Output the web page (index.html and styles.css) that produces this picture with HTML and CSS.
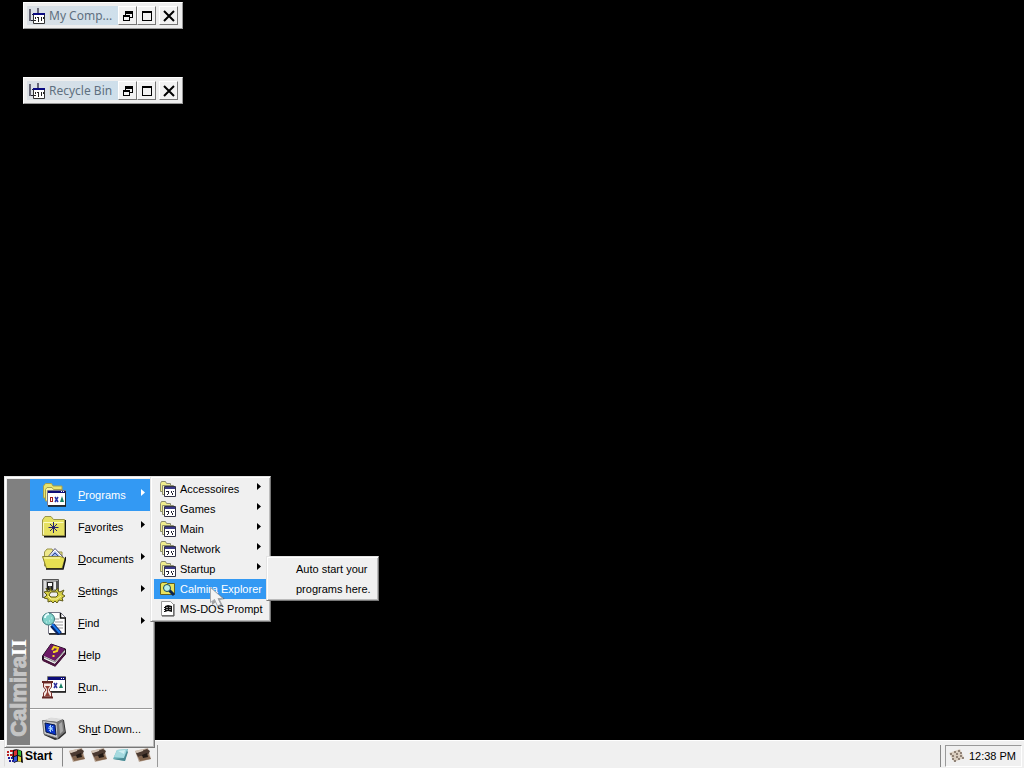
FILE: index.html
```html
<!DOCTYPE html>
<html lang="en">
<head>
<meta charset="utf-8">
<meta name="viewport" content="width=device-width, initial-scale=1">
<title>Calmira II</title>
<link rel="stylesheet" href="styles.css">
</head>
<body>
<svg class="defs" aria-hidden="true">
  <symbol id="arrow" viewBox="0 0 4 7"><path d="M0 0 4 3.5 0 7Z" fill="currentColor"/></symbol>
  <symbol id="desk" viewBox="0 0 16 16">
    <path d="M0 1h2v12H0zM8 0h2v5H8z" fill="#667"/><path d="M2 12h3v1H2zM3 6h1v1H3z" fill="#223"/>
    <path d="M4.500 5.500h11v10h-11z" fill="#fff" stroke="#333"/><path d="M4 5h12v2H4z" fill="#0a0a80"/>
    <path d="M6 9h1v2H6zM5 12h2v1H5zM8 9h2v1H8zM9 10h1v4H9zM12 9h1v4h-1zM14 9h1v2h-1z" fill="#222"/>
  </symbol>
  <symbol id="restore" viewBox="0 0 12 12"><path d="M3 1h8v7H8V7h2V4H4v1H3zM1 5h7v6H1zM2 7v3h5V7z" fill="#000" fill-rule="evenodd"/></symbol>
  <symbol id="max" viewBox="0 0 12 12"><path d="M1 1h10v10H1zM2 3v7h8V3z" fill="#000" fill-rule="evenodd"/></symbol>
  <symbol id="close" viewBox="0 0 12 12"><path d="M1 1l10 10M11 1l-10 10" stroke="#000" stroke-width="2"/></symbol>
  <symbol id="group" viewBox="0 0 16 16">
    <path d="M.500 10.500v-8l1-2h4l1 2h4v8z" fill="#f0ee8c" stroke="#8d8d70"/>
    <path d="M2.500 13.500v-9h11v9z" fill="#f7f5c0" stroke="#8d8d70"/>
    <path d="M4.500 5.500h11v10h-11z" fill="#fff" stroke="#334"/><path d="M5 6h10v2H5z" fill="#3a3a88"/>
    <path d="M6 10h3v1H6zM8 11h1v2H8zM7 13h1v1H7zM11 10h1v2h-1zM12 12h1v2h-1zM13 10h1v1h-1z" fill="#223"/>
  </symbol>
  <symbol id="photo" viewBox="0 0 16 16">
    <path d="M0 3 13 0 16 11 4 14Z" fill="#b9a594"/><path d="M1 5 12 1 15 3 13 7 3 9Z" fill="#4b3a31"/><path d="M3 9 13 6 16 11 5 13Z" fill="#81644d"/><path d="M7 7 12 5 13 9 8 10Z" fill="#211915"/><path d="M0 3 8 1 8 3 2 5Z" fill="#d3c5b8"/>
  </symbol>
</svg>

<main class="desktop">
  <section class="window window-computer">
    <div class="caption"><svg class="i16"><use href="#desk"/></svg><h2 class="title">My Comp...</h2></div>
    <button class="cbtn" aria-label="Restore"><svg><use href="#restore"/></svg></button><button class="cbtn" aria-label="Maximize"><svg><use href="#max"/></svg></button><button class="cbtn cbtn-close" aria-label="Close"><svg><use href="#close"/></svg></button>
  </section>
  <section class="window window-recycle">
    <div class="caption"><svg class="i16"><use href="#desk"/></svg><h2 class="title">Recycle Bin</h2></div>
    <button class="cbtn" aria-label="Restore"><svg><use href="#restore"/></svg></button><button class="cbtn" aria-label="Maximize"><svg><use href="#max"/></svg></button><button class="cbtn cbtn-close" aria-label="Close"><svg><use href="#close"/></svg></button>
  </section>
</main>

<div class="menus">
  <nav class="menu start-menu" aria-label="Start menu">
    <div class="band"><span class="brand">Calmira<span class="brand-two">II</span></span></div>
    <div class="items">
      <button class="item active">
        <svg class="i24" viewBox="0 0 24 24">
          <path d="M1.500 15V3l2-2.500h6L11 3h9v12z" fill="#e9e56f" stroke="#a7a04a"/><path d="M3.500 18V6.500L5 4.500h5l1.500 2H20V18z" fill="#f6f3a4" stroke="#a7a04a"/>
          <path d="M5.500 7.500h18v15h-18z" fill="#fff" stroke="#778"/><path d="M6 23h18V8" fill="none" stroke="#111" stroke-width="1.500"/><path d="M6 8h17v2H6z" fill="#0c0c78"/><path d="M19 8h1v1h-1zM21 8h1v1h-1z" fill="#fff"/>
          <path d="M8 14h3v5H8zM9 15v3h1v-3z" fill="#a02020" fill-rule="evenodd"/><path d="M13 14l3 5M16 14l-3 5" stroke="#2330a8" stroke-width="1.500"/><path d="M20 13l2 6h-4z" fill="#178065"/>
        </svg><span class="label"><u>P</u>rograms</span><svg class="arrow"><use href="#arrow"/></svg></button>
      <button class="item">
        <svg class="i24" viewBox="0 0 24 24">
          <path d="M2 21.500h21V5" fill="none" stroke="#111" stroke-width="2"/><path d="M.500 20.500V5l2.500-3.500h6L11.500 4.500h11v16z" fill="#e6e062" stroke="#9a9548"/><path d="M1.500 19.500V7.500h20" fill="none" stroke="#fbfac0"/>
          <path d="M11.500 7v11M6.500 12.500h10M8 9l7 7M15 9l-7 7" stroke="#26206e"/>
        </svg><span class="label">F<u>a</u>vorites</span><svg class="arrow"><use href="#arrow"/></svg></button>
      <button class="item">
        <svg class="i24" viewBox="0 0 24 24">
          <path d="M2.500 19V5l2.500-3h5l2 3h8v15z" fill="#eee88a" stroke="#98934b"/><path d="M5 11 13 1.500 22 11v5H5z" fill="#fff" stroke="#557"/><path d="M8 9l5-5 5 5z" fill="#9db3e6"/><path d="M10 9l3-3 3 3" stroke="#334b99" fill="none"/>
          <path d="M.500 9.500h18l4.500 2-3 10H4.500z" fill="#e6e052" stroke="#8a8538"/><path d="M2 11h16" stroke="#fffccb"/><path d="M4 22h17l3-12" fill="none" stroke="#111" stroke-width="1.500"/>
        </svg><span class="label"><u>D</u>ocuments</span><svg class="arrow"><use href="#arrow"/></svg></button>
      <button class="item">
        <svg class="i24" viewBox="0 0 24 24">
          <path d="M.500.500h16v18H.500z" fill="#a8a8a8" stroke="#555"/><path d="M2 2h2v15H2z" fill="#dedede"/><path d="M5 3h6v8H5z" fill="#222"/><path d="M6 4h4v3H6z" fill="#fff"/><path d="M7 7h2v2H7zM14 2h2v9h-2z" fill="#555"/><path d="M12 3h2v7h-2z" fill="#eee"/>
          <path d="M4 9l2 4 2-1V9l2 3h3l3-3v3l2 1 4-2-2 4 3 2-3 2 1 3-4-1-2 3-2-2-2 2-2-2-3 1v-3l-4-1 3-3-3-3 4-1z" fill="#d6cf45" stroke="#5e5a1b"/><path d="M9 13h6l1 3-2 2H9l-2-2z" fill="#efefef" stroke="#5e5a1b"/><path d="M6 17l3 3 6 0 4-3" fill="none" stroke="#f6f19b"/>
        </svg><span class="label"><u>S</u>ettings</span><svg class="arrow"><use href="#arrow"/></svg></button>
      <button class="item">
        <svg class="i24" viewBox="0 0 24 24">
          <path d="M6.500 1.500h12l5 5v16h-17z" fill="#fff" stroke="#778"/><path d="M7 23h16.500V7h-5V2" fill="none" stroke="#111" stroke-width="1.500"/><path d="M13 8h4M13 11h8M13 14h8M14 17h7" stroke="#999"/>
          <path d="M10 14l8 9" stroke="#092466" stroke-width="5"/><path d="M10 13l8 9" stroke="#1878ed" stroke-width="2"/><circle cx="6.500" cy="8" r="6" fill="#83d2cb" stroke="#37777a"/><path d="M3 7a4 4 0 0 1 4-4" stroke="#e6ffff" stroke-width="2" fill="none"/><path d="M4 11h1M7 10h1M9 7h1" stroke="#d2f5ef"/>
        </svg><span class="label"><u>F</u>ind</span><svg class="arrow"><use href="#arrow"/></svg></button>
      <button class="item">
        <svg class="i24" viewBox="0 0 24 24">
          <path d="M.500 13 9 1l14.500 5v5L13 23 .500 17z" fill="#281026" stroke="#1b091b"/><path d="M1 13 9 1l14 5-10 12z" fill="#6c1a66"/><path d="M2 16l11 5 10-12v-2L13 18 2 13z" fill="#eee"/><path d="M2 14l11 5 10-12" stroke="#888" fill="none"/><path d="M1 17l12 5.500 10-12" fill="none" stroke="#4d1540" stroke-width="2"/>
          <path d="M10 7l2-3 4 1-1 3-3 1v1M11.500 12v2" fill="none" stroke="#f3d323" stroke-width="2"/>
        </svg><span class="label"><u>H</u>elp</span></button>
      <button class="item">
        <svg class="i24" viewBox="0 0 24 24">
          <path d="M5.500 1.500h18v15h-18z" fill="#fff" stroke="#777"/><path d="M6 17h18V2" fill="none" stroke="#111" stroke-width="1.500"/><path d="M6 2h17v3H6z" fill="#0c0c78"/><path d="M19 3h1v1h-1zM21 3h1v1h-1z" fill="#fff"/><path d="M12 8l3 5M15 8l-3 5" stroke="#30329e" stroke-width="1.500"/><path d="M19 8l2 5h-4z" fill="#178065"/>
          <path d="M1.500 8v4L4 15l-2.500 3v4h8v-4L7 15l2.500-3V8z" fill="#f6eae5" stroke="#7b302d"/><path d="M0 7h11M0 22.500h11" stroke="#642724" stroke-width="2"/><path d="M3 11h5l-2 3v3l2 4H3l2-4v-3z" fill="#913f36"/>
        </svg><span class="label"><u>R</u>un...</span></button>
      <hr class="rule">
      <button class="item">
        <svg class="i24" viewBox="0 0 24 24">
          <path d="M1 4 9 1l13 2 2 13-7 6-4 1L2 18z" fill="#2d2d2d"/><path d="M1 3.500 9 .500l12 1.500-6 3z" fill="#ddd"/><path d="M15 5l6-3 2 13-7 6z" fill="#777"/><path d="M17 7l3-2 1 9-3 3z" fill="#a9a9a9"/><path d="M.500 3.500 15 5.500l1 16L2 17z" fill="#c9c9c9" stroke="#777"/><path d="M3 6l10 2 1 10L4 15z" fill="#0a35c9" stroke="#071747"/><path d="M8.500 8v7M6 11l5 1M7 9l4 5M11 9l-4 5" stroke="#a9d5ff"/>
        </svg><span class="label">Sh<u>u</u>t Down...</span></button>
    </div>
  </nav>

  <nav class="menu sub-menu" aria-label="Programs">
    <button class="item"><svg class="i16"><use href="#group"/></svg><span class="label">Accessoires</span><svg class="arrow"><use href="#arrow"/></svg></button>
    <button class="item"><svg class="i16"><use href="#group"/></svg><span class="label">Games</span><svg class="arrow"><use href="#arrow"/></svg></button>
    <button class="item"><svg class="i16"><use href="#group"/></svg><span class="label">Main</span><svg class="arrow"><use href="#arrow"/></svg></button>
    <button class="item"><svg class="i16"><use href="#group"/></svg><span class="label">Network</span><svg class="arrow"><use href="#arrow"/></svg></button>
    <button class="item"><svg class="i16"><use href="#group"/></svg><span class="label">Startup</span><svg class="arrow"><use href="#arrow"/></svg></button>
    <button class="item active"><svg class="i16" viewBox="0 0 16 16"><path d="M.500 13.500v-11l2-1h4l1 1h7v11z" fill="#e9e35c" stroke="#626020"/><path d="M9 9l5 5" stroke="#0b2450" stroke-width="3"/><circle cx="7" cy="7" r="3.500" fill="#b9efea" stroke="#164b58"/></svg><span class="label">Calmira Explorer</span></button>
    <button class="item"><svg class="i16" viewBox="0 0 16 16"><path d="M1.500.500h9l3 3v11h-12z" fill="#fff" stroke="#999"/><path d="M14 3v12H2" fill="none" stroke="#444"/><path d="M4 6h1v1H4zM4 8h1v1H4zM4 10h1v1H4zM5 5l3-1 4 1v6l-4-1-3 1z" fill="#111"/><path d="M6 6h2v1H6zM9 6h2v1H9zM6 8h2v1H6zM9 8h2v1H9z" fill="#888"/></svg><span class="label">MS-DOS Prompt</span></button>
  </nav>

  <p class="menu hint">Auto start your<br>programs here.</p>

  <svg class="pointer" viewBox="0 0 16 22" aria-hidden="true"><path d="M2 2v16l4-3 3 6 4-2-3-6 5-1z" fill="#555" opacity=".5"/><path d="M.500.500v15l4-3 3 6.500 3.500-1.500-3-6h5z" fill="#f4f4f4" stroke="#a4a8ae"/></svg>
</div>

<footer class="taskbar">
  <button class="start"><svg class="i16" viewBox="0 0 16 16"><path d="M6 2q4-2 9 1l1 12q-5-3-9 0L5 9z" fill="#111"/><path d="M0 3h2v2H0zM3 2h3v2H3zM0 6h2v2H0zM3 6h3v2H3z" fill="#b22"/><path d="M1 9h2v2H1zM4 9h2v2H4zM2 12h2v2H2zM5 12h2v2H5z" fill="#229"/><path d="M7 3l3-1v5L7 8z" fill="#d33"/><path d="M11 2l3 1v5l-3-1z" fill="#3b3"/><path d="M7 9l3-1v5l-3 1z" fill="#35d"/><path d="M11 8l3 1v5l-3-1z" fill="#dc3"/></svg><span>Start</span></button>
  <div class="quick">
    <button aria-label="Shortcut 1"><svg class="i16"><use href="#photo"/></svg></button>
    <button aria-label="Shortcut 2"><svg class="i16"><use href="#photo"/></svg></button>
    <button aria-label="Notepad"><svg class="i16" viewBox="0 0 16 16"><path d="M4 2 15 1 12 13 0 11Z" fill="#72b8c0"/><path d="M4 2 14 1 11 10 1 9Z" fill="#a5dadf"/><path d="M5 3l7-1-1 4z" fill="#d0f0f2"/><path d="M0 11 11 10 14 3l1 1-3 9z" fill="#4b8992"/></svg></button>
    <button aria-label="Shortcut 3"><svg class="i16"><use href="#photo"/></svg></button>
  </div>
  <div class="tray"><div class="clock"><svg class="i16" viewBox="0 0 16 16"><path d="M0 5 11 1 15 10 5 14Z" fill="#d9cdbf"/><path d="M1 6h2M5 4h2M9 3h2M3 8h2M7 6h2M11 5h2M3 11h2M7 9h2M11 8h2M5 13h2M9 11h2M13 10h2" stroke="#77685e" stroke-width="1.500"/></svg><time>12:38 PM</time></div></div>
</footer>
</body>
</html>
```

FILE: styles.css
```css
* { box-sizing: border-box; }

body {
  margin: 0;
  min-height: 100vh;
  display: flex;
  flex-direction: column;
  background: #000;
  color: #000;
  font: 11px/20px "Liberation Sans", Arial, sans-serif;
  position: relative;
  overflow: hidden;
}

button {
  font: inherit;
  color: inherit;
  background: none;
  border: 0;
  padding: 0;
  text-align: left;
}

svg { display: block; flex: none; }
.defs { position: absolute; width: 0; height: 0; }
.i16 { width: 16px; height: 16px; }
.i24 { width: 24px; height: 24px; }

.desktop { flex: 1; position: relative; }

.window {
  position: absolute;
  left: 23px;
  width: 160px;
  display: flex;
  align-items: center;
  padding: 3px 4px 3px 3px;
  background: #eee;
  border: 1px solid;
  border-color: #fff #999 #999 #fff;
}
.window-computer { top: 2px; }
.window-recycle { top: 77px; }
.caption {
  flex: 1;
  min-width: 0;
  display: flex;
  align-items: center;
  gap: 4px;
  padding-left: 2px;
  background: linear-gradient(90deg, #dbe0e5, #cedfeb);
}
.title {
  margin: 0;
  font: 12px/19px "Noto Sans", "Open Sans", sans-serif;
  color: #5f7080;
  white-space: nowrap;
}
.cbtn {
  width: 19px;
  height: 19px;
  display: flex;
  align-items: center;
  justify-content: center;
  background: #f2f2f2;
  border: 1px solid;
  border-color: #fff #777 #777 #fff;
}
.cbtn svg { width: 12px; height: 12px; }
.cbtn-close { margin-left: 3px; }

.menus {
  position: absolute;
  left: 4px;
  bottom: 20px;
  display: flex;
  align-items: flex-start;
}
.menu {
  background: #f0f0f0;
  border: 1px solid;
  border-color: #e4e4e4 #777 #777 #e4e4e4;
  box-shadow: inset 1px 1px #fff, inset -1px -1px #bbb;
  padding: 2px;
}
.start-menu { display: flex; width: 151px; }
.band {
  width: 23px;
  background: #808080;
  display: flex;
  align-items: flex-end;
  padding-bottom: 8px;
}
.brand {
  writing-mode: vertical-rl;
  transform: rotate(180deg);
  font-size: 22px;
  line-height: 23px;
  font-weight: bold;
  color: #c4c4c4;
  -webkit-text-stroke: 1px #c4c4c4;
}
.brand-two {
  font-family: "Liberation Serif", serif;
  color: #fff;
  -webkit-text-stroke: 0;
}
.items { flex: 1; }
.item {
  width: 100%;
  display: flex;
  align-items: center;
  white-space: nowrap;
}
.label { flex: 1; }
.arrow { width: 4px; height: 7px; margin-bottom: 6px; }
.active { background: #3399f3; color: #fff; }
.start-menu .item { height: 32px; padding: 0 7px 0 12px; gap: 12px; }
.start-menu .item .label { margin-right: -12px; }
.rule {
  margin: 5px 0 3px;
  border: 0;
  border-top: 1px solid #999;
  border-bottom: 1px solid #fff;
}

.sub-menu { width: 121px; margin-left: -5px; padding-left: 3px; }
.sub-menu .item { height: 20px; padding: 0 7px 0 6px; gap: 4px; }

.hint {
  width: 113px;
  margin: 80px 0 0 -5px;
  padding: 2px 2px 1px 29px;
  white-space: nowrap;
}

.pointer {
  position: absolute;
  left: 206px;
  top: 111px;
  width: 16px;
  height: 22px;
}

.taskbar {
  height: 28px;
  display: flex;
  align-items: stretch;
  padding: 4px 2px 1px 4px;
  background: #f0f0f0;
  border-top: 1px solid #fff;
}
.start {
  width: 59px;
  display: flex;
  align-items: center;
  gap: 2px;
  padding-left: 2px;
  font-size: 12px;
  font-weight: bold;
  border: 1px solid;
  border-color: #ddd #888 #f0f0f0 #ddd;
}
.quick {
  display: flex;
  align-items: center;
  gap: 6px;
  padding: 0 6px;
  border-right: 1px solid #999;
}
.tray {
  margin-left: auto;
  padding-left: 4px;
  border-left: 1px solid #888;
}
.clock {
  height: 100%;
  display: flex;
  align-items: center;
  gap: 4px;
  padding: 0 5px 0 3px;
  border: 1px solid;
  border-color: #999 #fff #fff #999;
}
```
